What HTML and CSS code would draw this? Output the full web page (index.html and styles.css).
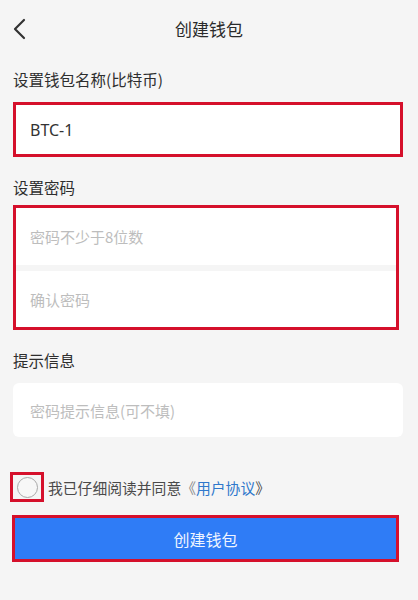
FILE: index.html
```html
<!DOCTYPE html>
<html lang="zh-CN">
<head>
  <meta charset="UTF-8" />
  <meta name="viewport" content="width=device-width, initial-scale=1" />
  <title>创建钱包</title>
  <link rel="stylesheet" href="styles.css">
</head>
<body>

  <div class="header">
    <div class="back">
      <svg width="14" height="22" viewBox="0 0 14 22"><path d="M11 2 L2 11 L11 20" fill="none" stroke="#333" stroke-width="2.2" stroke-linecap="round" stroke-linejoin="round"/></svg>
    </div>
    <div class="title">创建钱包</div>
    <div></div>
  </div>

  <div class="form">
    <div class="label">设置钱包名称(比特币)</div>
    <div class="mark name-box">
      <div class="field filled">BTC-1</div>
    </div>

    <div class="label label-gap">设置密码</div>
    <div class="mark pw-box">
      <div class="field pw-top">密码不少于8位数</div>
      <div class="sep"></div>
      <div class="field pw-bottom">确认密码</div>
    </div>

    <div class="label label-gap">提示信息</div>
    <div class="field hint">密码提示信息(可不填)</div>

    <div class="agree">
      <div class="mark radio-box"><span class="radio"></span></div>
      <div class="agree-text">我已仔细阅读并同意<span class="quote">《</span><span class="link">用户协议</span><span class="quote-end">》</span></div>
    </div>

    <div class="mark btn-box">
      <div class="btn">创建钱包</div>
    </div>
  </div>

</body>
</html>
```

FILE: styles.css
```css
* { margin: 0; padding: 0; box-sizing: border-box; }
body {
  font-family: "Noto Sans CJK SC", "Noto Sans", sans-serif;
  background: #f5f5f5;
  color: #333;
  width: 418px;
  height: 600px;
  overflow: hidden;
}
.header {
  height: 56px;
  display: grid;
  grid-template-columns: 40px 1fr 40px;
  align-items: center;
}
.back {
  padding-left: 13px;
  padding-top: 1px;
  display: flex;
  align-items: center;
}
.title {
  text-align: center;
  font-size: 17px;
  color: #2a2a2a;
}
.form {
  padding: 0 13px;
}
.label {
  height: 30px;
  line-height: 30px;
  margin-top: 8px;
  font-size: 15.5px;
  color: #2e2e2e;
}
.label-gap {
  margin-top: 15px;
}
.mark {
  border: 3px solid #d5102b;
}
.name-box {
  margin-top: 8px;
  width: 390px;
  height: 55px;
  background: #fff;
}
.field {
  display: flex;
  align-items: center;
  padding-left: 14px;
  font-size: 15px;
  color: #bdbdbd;
  background: #fff;
}
.filled {
  height: 100%;
  color: #333;
  font-family: "Noto Sans", sans-serif;
  font-size: 16px;
}
.pw-box {
  margin-top: 3px;
  width: 386px;
  height: 125px;
  background: #fff;
}
.pw-top {
  height: 57px;
}
.sep {
  height: 6px;
  background: #f5f5f5;
}
.pw-bottom {
  height: 56px;
}
.hint {
  margin-top: 8px;
  width: 390px;
  height: 54px;
  padding-left: 17px;
  border-radius: 6px;
}
.agree {
  margin-top: 35px;
  margin-left: -3px;
  display: flex;
  align-items: center;
  gap: 4px;
}
.radio-box {
  width: 34px;
  height: 30px;
  display: flex;
  align-items: center;
  justify-content: center;
}
.radio {
  width: 21px;
  height: 21px;
  border: 1.5px solid #a8a8a8;
  border-radius: 50%;
  background: #f7f7f7;
}
.agree-text {
  font-size: 14.8px;
  color: #4a4a4a;
}
.link {
  color: #2f78cc;
}
.quote {
  color: #888;
}
.quote-end {
  color: #4a4a4a;
}
.btn-box {
  margin-top: 13px;
  margin-left: -1px;
  width: 387px;
  height: 47px;
}
.btn {
  height: 100%;
  background: #2f7cf6;
  color: #eef4ff;
  font-size: 16px;
  display: flex;
  align-items: center;
  justify-content: center;
}
```
